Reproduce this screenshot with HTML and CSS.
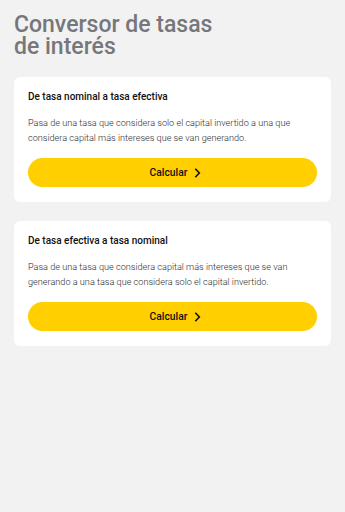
FILE: index.html
```html
<!DOCTYPE html>
<html lang="es">
<head>
<meta charset="utf-8">
<title>Conversor de tasas de interés</title>
<link rel="stylesheet" href="styles.css">
</head>
<body>
<main class="page">
  <h1 class="title">Conversor de tasas<br>de interés</h1>
  <section class="card">
    <h2 class="card-title">De tasa nominal a tasa efectiva</h2>
    <p class="card-text">Pasa de una tasa que considera solo el capital invertido a una que considera capital más intereses que se van generando.</p>
    <button class="btn" type="button">Calcular
      <svg class="chev" viewBox="0 0 8 12" width="7" height="10"><path d="M2 1.5 L6.2 6 L2 10.5" fill="none" stroke="#111" stroke-width="1.9" stroke-linecap="square" stroke-linejoin="miter"/></svg>
    </button>
  </section>
  <section class="card">
    <h2 class="card-title">De tasa efectiva a tasa nominal</h2>
    <p class="card-text">Pasa de una tasa que considera capital más intereses que se van generando a una tasa que considera solo el capital invertido.</p>
    <button class="btn" type="button">Calcular
      <svg class="chev" viewBox="0 0 8 12" width="7" height="10"><path d="M2 1.5 L6.2 6 L2 10.5" fill="none" stroke="#111" stroke-width="1.9" stroke-linecap="square" stroke-linejoin="miter"/></svg>
    </button>
  </section>
</main>
</body>
</html>
```

FILE: styles.css
```css
html, body {
  margin: 0;
  padding: 0;
  background: #f2f2f2;
  height: 100%;
}
body {
  font-family: Roboto, "Noto Sans", sans-serif;
  color: #111;
}
.page {
  padding: 14px 14px 20px;
  display: flex;
  flex-direction: column;
  gap: 19px;
}
.title {
  margin: 0 0 0;
  font-size: 23px;
  line-height: 22px;
  font-weight: 500;
  color: #76777a;
}
.card {
  background: #fff;
  border-radius: 6px;
  padding: 13px 14px 15px;
  display: flex;
  flex-direction: column;
}
.card-title {
  margin: 0;
  font-size: 10px;
  line-height: 14px;
  font-weight: 500;
  color: #111;
}
.card-text {
  margin: 12px 0 0;
  font-size: 9.15px;
  line-height: 14.5px;
  font-weight: 300;
  color: #2b2b2b;
}
.btn {
  margin-top: 13px;
  height: 29px;
  border: none;
  border-radius: 15px;
  background: #ffcf00;
  font-family: Roboto, sans-serif;
  font-size: 10.3px;
  font-weight: 500;
  color: #111;
  display: flex;
  align-items: center;
  justify-content: center;
  gap: 7px;
  padding: 0 0 0 6px;
}
.chev {
  display: block;
}
```
